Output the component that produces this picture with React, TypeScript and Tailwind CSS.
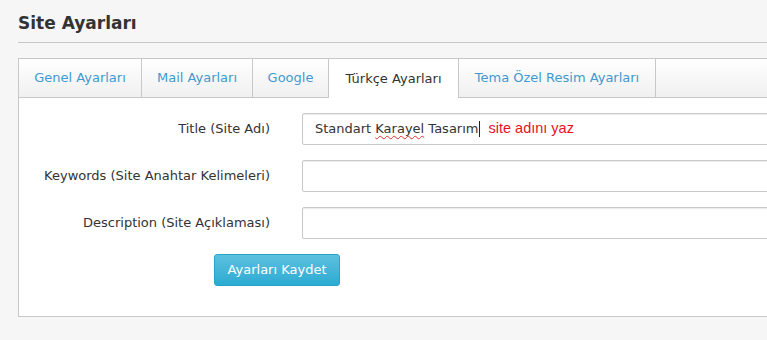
import React from "react";

const tabs = [
  { label: "Genel Ayarları", w: "w-[123px]" },
  { label: "Mail Ayarları", w: "w-[111px]" },
  { label: "Google", w: "w-[76px]" },
  { label: "Türkçe Ayarları", w: "w-[130px]", active: true },
  { label: "Tema Özel Resim Ayarları", w: "w-[197px]" },
];

const fields = [
  { label: "Title (Site Adı)", filled: true },
  { label: "Keywords (Site Anahtar Kelimeleri)" },
  { label: "Description (Site Açıklaması)" },
];

function App() {
  return (
    <div className="w-[767px] h-[340px] overflow-hidden bg-[#f6f6f6] pl-[18px] font-['DejaVu_Sans',Verdana,sans-serif] text-[#333]">
      <div className="w-[800px] border-b border-[#c6c6c6] pt-[13px] pb-[8px]">
        <h1 className="text-[17px] font-bold leading-[21px] text-[#333]">Site Ayarları</h1>
      </div>

      <div className="mt-[15px] w-[800px]">
        <div className="flex h-[40px] border-t border-l border-[#c8c8c8]">
          {tabs.map((t) => (
            <div
              key={t.label}
              className={
                t.active
                  ? `${t.w} flex items-center justify-center border-r border-[#c8c8c8] bg-white text-[13px] text-[#333]`
                  : `${t.w} flex items-center justify-center border-r border-b border-[#c8c8c8] bg-gradient-to-b from-white to-[#f0f0f0] text-[13px] text-[#3f9ad0]`
              }
            >
              {t.label}
            </div>
          ))}
          <div className="flex-1 border-b border-[#c8c8c8] bg-gradient-to-b from-white to-[#f0f0f0]" />
        </div>

        <div className="h-[219px] border-l border-b border-[#c8c8c8] bg-white pt-[15px]">
          <div className="flex flex-col gap-[15px]">
            {fields.map((f) => (
              <div key={f.label} className="flex items-center">
                <label className="w-[253px] text-right text-[13px] text-[#333]">{f.label}</label>
                <div className="ml-[32px] flex h-[32px] w-[520px] items-center rounded-[2px] border border-[#c9c9c9] bg-white px-[12px] shadow-[inset_0_1px_1px_rgba(0,0,0,0.08)]">
                  {f.filled && (
                    <>
                      <span className="text-[13px] text-[#333]">
                        Standart{" "}
                        <span className="underline decoration-wavy decoration-[#e03030] decoration-1 underline-offset-2">Karayel</span>{" "}
                        Tasarım
                      </span>
                      <span className="ml-[1px] h-[16px] w-px bg-[#222]" />
                      <span className="ml-[8px] font-['Liberation_Sans',Arial,sans-serif] text-[14.5px] text-[#e8101a]">site adını yaz</span>
                    </>
                  )}
                </div>
              </div>
            ))}
          </div>
          <div className="mt-[15px] pl-[195px]">
            <button className="h-[32px] w-[126px] rounded-[3px] border border-[#28a4c9] bg-gradient-to-b from-[#5bc0de] to-[#2aabd2] text-[13px] text-white">
              Ayarları Kaydet
            </button>
          </div>
        </div>
      </div>
    </div>
  );
}

export default App;
